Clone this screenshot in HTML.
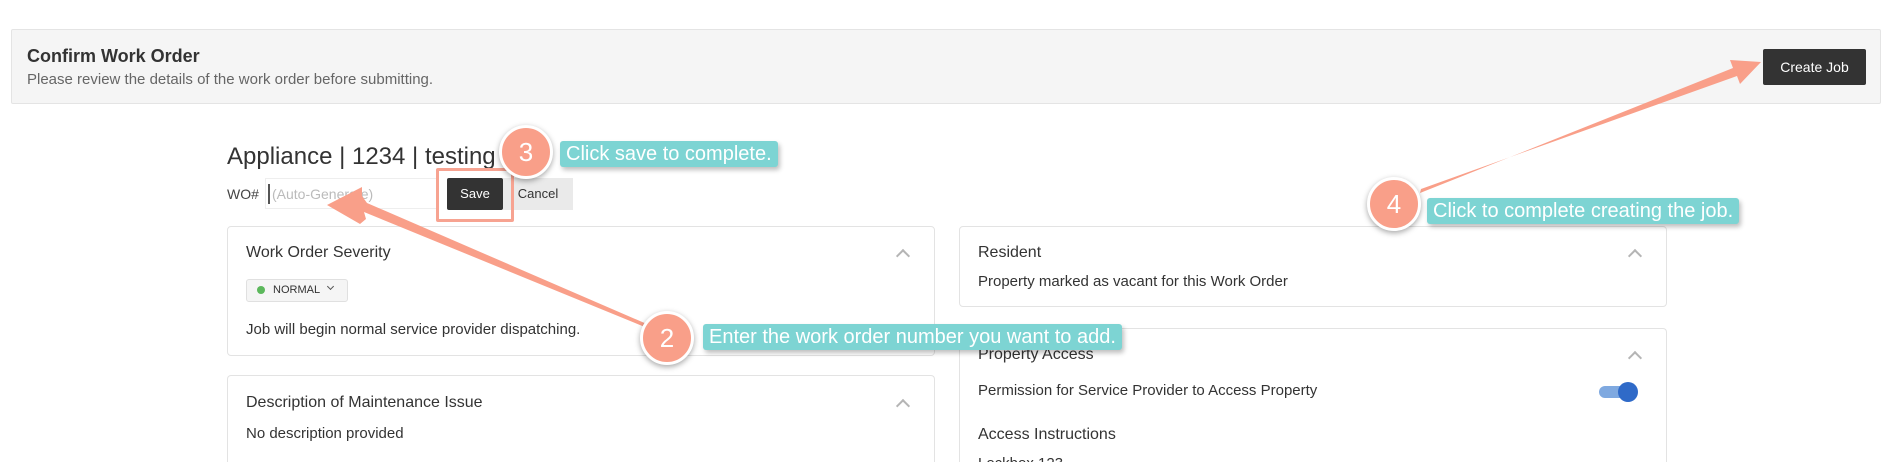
<!DOCTYPE html>
<html><head><meta charset="utf-8">
<style>
*{box-sizing:border-box;margin:0;padding:0}
html,body{width:1892px;height:462px;overflow:hidden}
body{background:#fff;font-family:"Liberation Sans",sans-serif;color:#333;position:relative}
.abs{position:absolute}
.hdr{left:11px;top:29px;width:1870px;height:75px;background:#f5f5f5;border:1px solid #e4e4e4;border-radius:2px}
.card{position:absolute;background:#fff;border:1px solid #e3e3e3;border-bottom:none;border-radius:4px 4px 0 0}
.ttl{position:absolute;font-size:16px;color:#333}
.txt{position:absolute;font-size:15px;color:#333}
.chev{position:absolute;width:10px;height:10px;border-left:2px solid #b5b5b5;border-top:2px solid #b5b5b5;transform:rotate(45deg)}
.circ{position:absolute;width:54px;height:54px;border-radius:50%;background:#f99f89;border:3px solid #fff;box-shadow:0 2px 6px rgba(0,0,0,.35);color:#fff;font-size:26px;text-align:center;line-height:48px}
.lbl{position:absolute;background:#7dd4d3;color:#fff;font-size:20px;padding:0 6px;line-height:26px;height:26px;border-radius:3px;box-shadow:2px 3px 5px rgba(0,0,0,.25);white-space:nowrap}
</style></head><body>
<div class="abs hdr"></div>
<div class="abs" style="left:27px;top:46px;font-size:18px;font-weight:bold;color:#333">Confirm Work Order</div>
<div class="abs" style="left:27px;top:71px;font-size:15px;color:#666">Please review the details of the work order before submitting.</div>
<div class="abs" style="left:1763px;top:49px;width:103px;height:36px;background:#333;color:#fff;font-size:14px;line-height:36px;text-align:center;border-radius:2px">Create Job</div>

<div class="abs" style="left:227px;top:143px;font-size:24px;color:#333">Appliance | 1234 | testing</div>
<div class="abs" style="left:227px;top:186px;font-size:14px;color:#444">WO#</div>
<div class="abs" style="left:265px;top:178px;width:172px;height:31px;border:1px solid #eee;background:#fff"></div>
<div class="abs" style="left:268px;top:184px;width:2px;height:20px;background:#555"></div>
<div class="abs" style="left:272px;top:186px;font-size:14px;color:#bbb">(Auto-Generate)</div>
<div class="abs" style="left:503px;top:178px;width:70px;height:32px;background:#eaeaea;color:#333;font-size:13px;line-height:32px;text-align:center">Cancel</div>
<div class="abs" style="left:447px;top:178px;width:56px;height:32px;background:#333;color:#fff;font-size:13px;line-height:32px;text-align:center;border-radius:2px">Save</div>
<div class="abs" style="left:436px;top:168px;width:78px;height:54px;border:3px solid #f7a391;border-radius:2px"></div>

<div class="card" style="left:227px;top:226px;width:708px;height:130px;border-bottom:1px solid #e3e3e3;border-radius:4px"></div>
<div class="ttl" style="left:246px;top:244px">Work Order Severity</div>
<div class="chev" style="left:898px;top:251px"></div>
<div class="abs" style="left:246px;top:279px;width:102px;height:23px;background:#f5f5f5;border:1px solid #e0e0e0;border-radius:3px"></div>
<div class="abs" style="left:257px;top:286px;width:8px;height:8px;border-radius:50%;background:#5cb85c"></div>
<div class="abs" style="left:273px;top:284px;font-size:11px;color:#333">NORMAL</div>
<div class="abs" style="left:328px;top:284px;width:5px;height:5px;border-right:1px solid #555;border-bottom:1px solid #555;transform:rotate(45deg)"></div>
<div class="txt" style="left:246px;top:321px">Job will begin normal service provider dispatching.</div>

<div class="card" style="left:227px;top:375px;width:708px;height:87px"></div>
<div class="ttl" style="left:246px;top:394px">Description of Maintenance Issue</div>
<div class="chev" style="left:898px;top:401px"></div>
<div class="txt" style="left:246px;top:425px">No description provided</div>

<div class="card" style="left:959px;top:226px;width:708px;height:81px;border-bottom:1px solid #e3e3e3;border-radius:4px"></div>
<div class="ttl" style="left:978px;top:244px">Resident</div>
<div class="chev" style="left:1630px;top:251px"></div>
<div class="txt" style="left:978px;top:273px">Property marked as vacant for this Work Order</div>

<div class="card" style="left:959px;top:328px;width:708px;height:134px"></div>
<div class="ttl" style="left:978px;top:346px">Property Access</div>
<div class="chev" style="left:1630px;top:353px"></div>
<div class="txt" style="left:978px;top:382px">Permission for Service Provider to Access Property</div>
<div class="abs" style="left:1599px;top:386px;width:34px;height:12px;border-radius:6px;background:#7fa9e0"></div>
<div class="abs" style="left:1618px;top:382px;width:20px;height:20px;border-radius:50%;background:#2f6ac8"></div>
<div class="ttl" style="left:978px;top:426px">Access Instructions</div>
<div class="abs" style="left:978px;top:455px;width:200px;height:7px;overflow:hidden;font-size:15px;line-height:17px">Lockbox 123</div>

<svg class="abs" style="left:0;top:0" width="1892" height="462">
<polygon points="662,334 364,212 366,219 360,224 327,205 362,187 362,196 367,203 663,331" fill="#f99f89"/>
<polygon points="1420,193 1733,68 1730,60 1761,62 1740,84 1737,76 1421,189" fill="#f99f89"/>
</svg>

<div class="circ" style="left:499px;top:125px">3</div>
<div class="lbl" style="left:560px;top:141px">Click save to complete.</div>
<div class="circ" style="left:640px;top:311px">2</div>
<div class="lbl" style="left:703px;top:324px">Enter the work order number you want to add.</div>
<div class="circ" style="left:1367px;top:177px">4</div>
<div class="lbl" style="left:1427px;top:198px">Click to complete creating the job.</div>
</body></html>
